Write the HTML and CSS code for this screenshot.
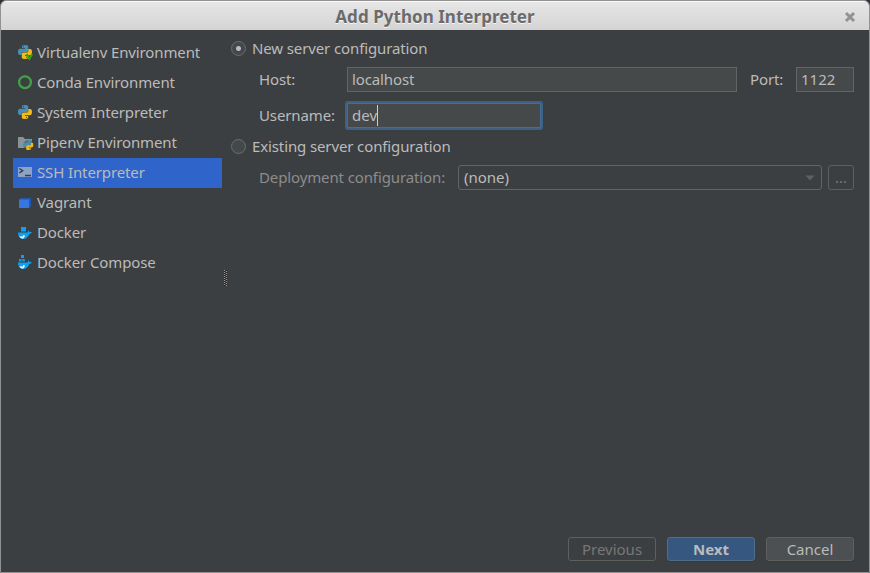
FILE: index.html
```html
<!DOCTYPE html>
<html lang="en">
<head>
<meta charset="utf-8">
<title>Add Python Interpreter</title>
<link rel="stylesheet" href="styles.css">
</head>
<body>
<svg class="defs" width="0" height="0">
  <symbol id="python" viewBox="0 0 14 14">
    <path fill="#4490b8" d="M4 1.2Q4 0 7 0t3.2 1.2V6Q10.200 7 9 7H5Q3.600 7 3.600 8.500V10H2Q0 10 0 6.800T2 3.800H7V3H4z"/>
    <path fill="#f0bd16" d="M10.200 4H12Q14 4 14 7t-2 3.200H7V11H10.200V12.800Q10 14 7 14T3.800 12.800V9Q3.800 7.500 5.200 7.500H9Q10.400 7.500 10.400 6z"/>
    <path fill="#3c3f41" d="M5 1.200h1v1H5zM8 11.800h1v1H8z"/>
  </symbol>
  <symbol id="whale" viewBox="0 0 14 9">
    <path fill="#0d9ff0" d="M0 2.500H9.500Q10.300 2.300 10.200 1V0Q11.300.8 11.400 2.100Q13 1.700 14 2.300Q13.300 3.900 11.300 4Q9.700 9 5 9Q0 9 0 2.500z"/>
    <path fill="#e8f6ff" d="M1.300 6.500Q4.500 6.800 6 4.800L7 6Q6 8.400 4.500 8.800Q2.300 8.400 1.300 6.500z"/>
    <path fill="#0d9ff0" d="M4 5.500h1v1H4z"/>
  </symbol>
</svg>
<div class="window">
  <header class="titlebar">
    <h1 class="title">Add Python Interpreter</h1>
    <svg class="close" width="12" height="12" viewBox="0 0 12 12"><path d="M2 2L10 10M10 2L2 10"/></svg>
  </header>
  <div class="content">
    <nav class="sidebar">
      <div class="item"><svg class="icon" viewBox="0 0 16 16"><use href="#python" x="1" y="0" width="14" height="14"/><path class="venv" d="M9.700 9L12.300 14L15.200 9"/></svg><span>Virtualenv Environment</span></div>
      <div class="item"><svg class="icon" viewBox="0 0 16 16"><circle class="conda" cx="8" cy="7.200" r="5.900"/></svg><span>Conda Environment</span></div>
      <div class="item"><svg class="icon" viewBox="0 0 16 16"><use href="#python" x="1" y="0" width="14" height="14"/></svg><span>System Interpreter</span></div>
      <div class="item"><svg class="icon" viewBox="0 0 16 16"><path fill="#87939a" d="M1 2H6L8 4H15V13H1z"/><circle cx="11.500" cy="10" r="5" fill="#3c3f41" opacity=".6"/><use href="#python" x="6.500" y="5" width="10" height="10"/></svg><span>Pipenv Environment</span></div>
      <div class="item selected"><svg class="icon" viewBox="0 0 16 16"><path fill="#8ea2c5" d="M1 2h14v10H1z"/><path class="prompt" d="M2.300 3.500L5.700 5.700L2.300 8M8 10.500H14"/></svg><span>SSH Interpreter</span></div>
      <div class="item"><svg class="icon" viewBox="0 0 16 16"><path fill="#2259ad" d="M4 3H14V11L12 13V5H2z"/><path fill="#3577de" d="M2 4.500H12V13H2z"/></svg><span>Vagrant</span></div>
      <div class="item"><svg class="icon" viewBox="0 0 16 16"><path fill="#0d9ff0" d="M4 2h5v4.500H4z"/><use href="#whale" x="1" y="5" width="14" height="9"/></svg><span>Docker</span></div>
      <div class="item"><svg class="icon" viewBox="0 0 16 16"><path fill="#0d9ff0" d="M4 0h3v3H4zM2 4h2.500v2.500H2zM5.300 4h2.500v2.500H5.300z"/><use href="#whale" x="1" y="5" width="14" height="9"/></svg><span>Docker Compose</span></div>
    </nav>
    <div class="splitter"><svg width="5" height="16" viewBox="0 0 5 16"><path class="grip-dark" d="M1.500 1V16M3.500 0V15"/><path class="grip-light" d="M1.500 0V16M3.500 1V16"/></svg></div>
    <main class="form">
      <div class="radio-row"><span class="radio checked"></span><span>New server configuration</span></div>
      <div class="field-row host-row"><span class="label">Host:</span><div class="input host">localhost</div><span class="port-label">Port:</span><div class="input port">1122</div></div>
      <div class="field-row user-row"><span class="label">Username:</span><div class="input user focused">dev<span class="caret"></span></div></div>
      <div class="radio-row existing"><span class="radio"></span><span>Existing server configuration</span></div>
      <div class="field-row deploy-row"><span class="deploy-label">Deployment configuration:</span><div class="select"><span>(none)</span><svg width="10" height="6" viewBox="0 0 10 6"><path fill="#5e6162" d="M.5 .5H9.500L5 5.500z"/></svg></div><div class="browse">...</div></div>
    </main>
  </div>
  <footer class="actions">
    <div class="button disabled">Previous</div>
    <div class="button primary">Next</div>
    <div class="button">Cancel</div>
  </footer>
</div>
</body>
</html>
```
FILE: styles.css
```css
* { box-sizing: border-box; }
body {
  margin: 0;
  background: #303238;
  color: #bbbbbb;
  font: 15px/20px "Noto Sans", sans-serif;
  white-space: nowrap;
}
.defs { position: absolute; }
.window {
  display: flex;
  flex-direction: column;
  width: 870px;
  height: 573px;
  border: 1px solid #929292;
  border-radius: 6px 6px 0 0;
  background: #3c3f41;
  overflow: hidden;
}
.titlebar {
  display: grid;
  grid-template-columns: 40px 1fr 40px;
  align-items: center;
  height: 29px;
  flex: none;
  border-top: 1px solid #fafafa;
  background: linear-gradient(#e6e6e6, #d4d4d4);
}
.title {
  grid-column: 2;
  margin: 0;
  padding-top: 2px;
  text-align: center;
  color: #6b6b6b;
  font-size: 17px;
  letter-spacing: 0.04px;
  line-height: 24px;
  text-shadow: 0 1px #f5f5f5;
}
.close { margin: 1px 0 0 15px; fill: none; stroke: #929292; stroke-width: 3; }
.content { display: flex; flex: 1; padding: 8px 15px 0 12px; letter-spacing: -0.12px; }
.sidebar { width: 209px; }
.item { display: flex; align-items: center; gap: 4px; height: 30px; padding-left: 4px; }
.item span { padding-bottom: 2px; }
.selected { background: #2f65ca; }
.icon { width: 16px; height: 16px; flex: none; overflow: visible; }
.venv { fill: none; stroke: #35a515; stroke-width: 1.8; }
.conda { fill: none; stroke: #43a047; stroke-width: 2.3; }
.prompt { fill: none; stroke: #353d4b; stroke-width: 1.4; }
.splitter { width: 9px; padding: 232px 0 0 1px; }
.splitter svg { display: block; }
.grip-dark { stroke: #202224; stroke-dasharray: 1 1; }
.grip-light { stroke: #999; stroke-dasharray: 1 1; }
.form { width: 623px; }
.radio-row { display: flex; align-items: center; gap: 6px; height: 20px; }
.radio {
  width: 15px;
  height: 15px;
  border: 1px solid #6b6e70;
  border-radius: 50%;
  background: #43494a;
}
.checked { background: radial-gradient(circle, #bbb 0 2px, #43494a 3px); }
.field-row { display: flex; align-items: center; padding-left: 28px; }
.host-row { margin-top: 9px; }
.user-row { margin-top: 11px; }
.existing { margin-top: 8px; }
.deploy-row { margin-top: 9px; color: #8c8c8c; }
.label { width: 88px; padding-bottom: 2px; }
.input {
  display: flex;
  align-items: center;
  height: 25px;
  padding: 0 4px 2px;
  border: 1px solid #646464;
  background: #45494a;
}
.host { width: 390px; }
.port-label { width: 59px; padding: 0 0 2px 13px; }
.port { width: 58px; letter-spacing: 0; }
.user { width: 194px; letter-spacing: 0; }
.focused { border-color: #466d94; box-shadow: 0 0 0 2px #3d6185; border-radius: 1px; }
.caret { width: 1px; height: 21px; margin-top: 2px; background: #ccc; }
.deploy-label { width: 199px; padding-bottom: 2px; }
.select {
  display: flex;
  align-items: center;
  justify-content: space-between;
  width: 364px;
  height: 25px;
  padding: 0 6px 0 5px;
  border: 1px solid #646464;
  border-radius: 3px;
  color: #bbb;
  letter-spacing: 0;
}
.select span { padding-bottom: 2px; }
.browse {
  width: 26px;
  height: 25px;
  margin-left: 6px;
  border: 1px solid #5e6060;
  border-radius: 3px;
  color: #777;
  text-align: center;
  letter-spacing: 0;
  line-height: 22px;
}
.actions { display: flex; justify-content: flex-end; gap: 11px; padding: 0 15px 11px 0; }
.button {
  width: 88px;
  height: 24px;
  border: 1px solid #5e6060;
  border-radius: 3px;
  background: #4c5052;
  box-shadow: 0 1px #37393b;
  text-align: center;
  line-height: 23px;
}
.primary { border-color: #4c708c; background: #365880; font-weight: bold; }
.disabled { background: transparent; box-shadow: none; color: #777; }
```
